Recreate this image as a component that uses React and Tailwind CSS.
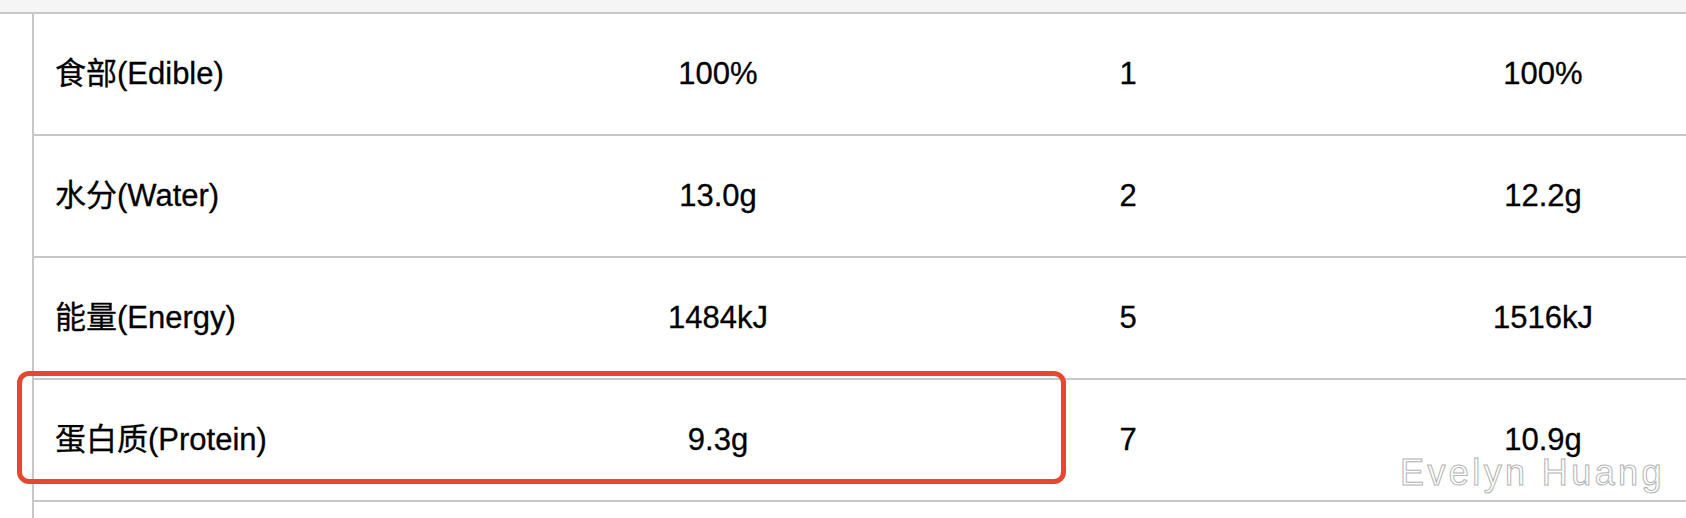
import React from "react";

const rows = [
  ["食部(Edible)", "100%", "1", "100%"],
  ["水分(Water)", "13.0g", "2", "12.2g"],
  ["能量(Energy)", "1484kJ", "5", "1516kJ"],
  ["蛋白质(Protein)", "9.3g", "7", "10.9g"],
  ["", "", "", ""],
];

export default function App() {
  return (
    <div
      className="relative w-[1686px] h-[518px] overflow-hidden bg-white text-black flex flex-col"
      style={{ fontFamily: '"Liberation Sans", Arial, "Noto Sans CJK SC", sans-serif' }}
    >
      <div className="h-[14px] shrink-0 bg-[#f5f5f5] border-b-2 border-[#c8c8c8]" />
      <div className="flex flex-1 min-h-0">
        <div className="w-[32px] shrink-0" />
        <div className="flex-1 border-l-2 border-[#c8c8c8] min-w-0">
          {rows.map((r, i) => (
            <div
              key={i}
              className="grid grid-cols-[479px_410px_410px_420px] h-[122px] border-b-2 border-[#c8c8c8] items-center text-[31px] leading-[36px] [-webkit-text-stroke:0.3px_#000]"
            >
              <div className="pl-[21px] whitespace-nowrap">{r[0]}</div>
              <div className="text-center whitespace-nowrap">{r[1]}</div>
              <div className="text-center whitespace-nowrap">{r[2]}</div>
              <div className="text-center whitespace-nowrap">{r[3]}</div>
            </div>
          ))}
        </div>
      </div>

      <div className="absolute left-[17px] top-[371px] w-[1049px] h-[113px] border-[5px] border-[#e5472f] rounded-[12px]" />

      <div className="absolute left-[1400px] top-[458px] text-[36px] leading-[30px] tracking-[3.4px] text-white whitespace-nowrap [-webkit-text-stroke:1px_#b4b4b4]">
        Evelyn Huang
      </div>
    </div>
  );
}
